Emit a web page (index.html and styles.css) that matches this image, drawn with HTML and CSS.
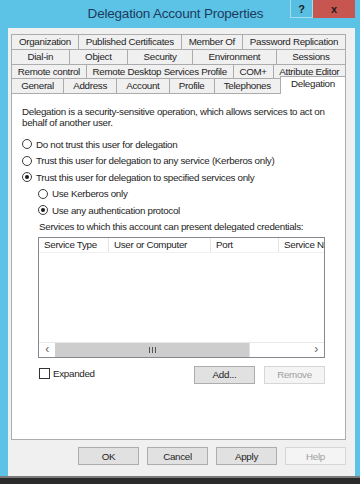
FILE: index.html
```html
<!DOCTYPE html>
<html lang="en">
<head>
  <meta charset="UTF-8">
  <meta name="viewport" content="width=device-width, initial-scale=1.0">
  <title>Delegation Account Properties</title>
  <link rel="stylesheet" href="styles.css">
</head>
<body>
  <div class="window">
    <div class="titlebar">
      <span></span>
      <span class="title">Delegation Account Properties</span>
      <div class="caption-btns">
        <span class="cap help">?</span>
        <span class="cap close">x</span>
      </div>
    </div>

    <div class="dialog">
      <div class="tabs">
        <div class="tab-row">
          <span class="tab">Organization</span>
          <span class="tab">Published Certificates</span>
          <span class="tab">Member Of</span>
          <span class="tab">Password Replication</span>
        </div>
        <div class="tab-row">
          <span class="tab">Dial-in</span>
          <span class="tab">Object</span>
          <span class="tab">Security</span>
          <span class="tab">Environment</span>
          <span class="tab">Sessions</span>
        </div>
        <div class="tab-row">
          <span class="tab">Remote control</span>
          <span class="tab">Remote Desktop Services Profile</span>
          <span class="tab">COM+</span>
          <span class="tab">Attribute Editor</span>
        </div>
        <div class="tab-row front">
          <span class="tab">General</span>
          <span class="tab">Address</span>
          <span class="tab">Account</span>
          <span class="tab">Profile</span>
          <span class="tab">Telephones</span>
          <span class="tab active">Delegation</span>
        </div>
      </div>

      <div class="panel">
        <p class="intro">Delegation is a security-sensitive operation, which allows services to act on behalf of another user.</p>

        <label class="opt"><span class="radio"></span>Do not trust this user for delegation</label>
        <label class="opt"><span class="radio"></span>Trust this user for delegation to any service (Kerberos only)</label>
        <label class="opt"><span class="radio on"></span>Trust this user for delegation to specified services only</label>
        <div class="sub">
          <label class="opt"><span class="radio"></span>Use Kerberos only</label>
          <label class="opt"><span class="radio on"></span>Use any authentication protocol</label>

          <p class="list-label">Services to which this account can present delegated credentials:</p>
          <div class="listview">
            <div class="list-head">
              <span class="col c1">Service Type</span>
              <span class="col c2">User or Computer</span>
              <span class="col c3">Port</span>
              <span class="col c4">Service Na</span>
            </div>
            <div class="list-body"></div>
            <div class="hscroll">
              <span class="arrow">&lsaquo;</span>
              <span class="thumb"><span class="grip"></span></span>
              <span class="track"></span>
              <span class="arrow">&rsaquo;</span>
            </div>
          </div>

          <div class="list-actions">
            <label class="check"><span class="box"></span>Expanded</label>
            <div class="actions">
              <span class="btn">Add...</span>
              <span class="btn disabled">Remove</span>
            </div>
          </div>
        </div>
      </div>

      <div class="footer">
        <span class="btn">OK</span>
        <span class="btn">Cancel</span>
        <span class="btn">Apply</span>
        <span class="btn disabled">Help</span>
      </div>
    </div>
  </div>
  <div class="taskbar"></div>
</body>
</html>
```

FILE: styles.css
```css
body {
  margin:0; padding:0;
  width:360px; height:484px; overflow:hidden;
  font-family: "Liberation Sans", Arial, sans-serif;
  font-size:9.8px; letter-spacing:-0.3px; color:#1e1e1e;
  background:#3a3a3a;
}
.window {
  background:#5cc3e6;
  height:476px;
  padding:0 5px 0 8px;
  box-sizing:border-box;
  display:flex; flex-direction:column;
}
.titlebar {
  height:28px;
  display:grid; grid-template-columns:1fr auto 1fr;
  margin-left:-8px;
}
.title {
  font-size:13.5px; letter-spacing:-0.2px; color:#1d3b5e;
  padding-top:6px; padding-right:4px;
}
.caption-btns { display:flex; justify-self:end; height:18px; }
.cap {
  display:flex; align-items:center; justify-content:center;
  font-weight:bold; font-size:11px; color:#1c1c1c;
}
.help {
  width:21px; background:#58bfe2;
  border:1px solid #a4dcf0; border-top:none;
}
.close { width:42px; background:#c75550; }

.dialog {
  flex:1;
  background:#f0f0f0;
  padding:6px 9px 0 3px;
  display:flex; flex-direction:column;
}

/* tabs */
.tabs { padding-left:1px; }
.tab-row { display:flex; height:15px; }
.tab {
  flex:1 1 auto;
  border:1px solid #acacac; border-bottom:none;
  margin-left:-1px;
  background:#f0f0f0;
  text-align:center; line-height:14px;
  white-space:nowrap;
}
.tab-row.front { height:14px; align-items:flex-end; }
.tab-row.front .tab { height:14px; }
.tab.active {
  flex-grow:0; width:64px;
  background:#fff; height:17px !important;
  margin-top:-3px; line-height:13px;
  position:relative; z-index:1;
  margin-bottom:-1px;
}

/* panel */
.panel {
  height:347px; box-sizing:border-box;
  background:#fff; border:1px solid #acacac;
  padding:12px 10px 0 10px;
}
.intro { margin:0 0 8px; line-height:11px; }
.opt {
  display:flex; align-items:center;
  height:16.5px;
}
.radio {
  width:10px; height:10px; box-sizing:border-box;
  border:1px solid #3c3c3c; border-radius:50%;
  margin-right:4px; background:#fff;
  display:flex; align-items:center; justify-content:center;
}
.radio.on::after {
  content:""; width:4px; height:4px; border-radius:50%; background:#1a1a1a;
}
.sub { padding-left:16px; }
.list-label { margin:2px 0 4px 1px; line-height:12px; }

.listview {
  width:287px; height:121px; box-sizing:border-box;
  border:1px solid #828790;
  display:flex; flex-direction:column;
}
.list-head { display:flex; height:14px; border-bottom:1px solid #f0f0f0; }
.col {
  border-right:1px solid #e5e5e5;
  padding-left:5px; line-height:14px;
  white-space:nowrap; overflow:hidden;
}
.c1 { width:64px; }
.c2 { width:96px; }
.c3 { width:62px; }
.c4 { flex:1; border-right:none; }
.list-body { flex:1; }
.hscroll {
  display:flex; height:14px;
  border-top:1px solid #e8e8e8;
  background:#fff;
}
.arrow {
  width:16px; text-align:center; line-height:13px;
  font-size:12px; color:#666;
}
.thumb {
  width:194px; background:#cdcdcd;
  display:flex; align-items:center; justify-content:center;
}
.grip {
  width:7px; height:6px;
  background:repeating-linear-gradient(90deg, #555 0 1px, transparent 1px 3px);
}
.track { flex:1; background:#fff; border-left:1px solid #e0e0e0; }

.list-actions {
  display:flex; justify-content:space-between;
  margin-top:9px; width:287px;
}
.check { display:flex; align-items:flex-start; padding-left:1px; padding-top:1px; }
.box {
  width:9px; height:9px; border:1px solid #333; background:#fff;
  margin-right:3px;
}
.actions { display:flex; gap:9px; margin-top:-1px; }

.btn {
  width:61px; height:18px; box-sizing:border-box;
  display:flex; align-items:center; justify-content:center;
  background:#e1e1e1; border:1px solid #adadad;
}
.btn.disabled { background:#f4f4f4; border-color:#d6d6d6; color:#a0a0a0; }

.footer {
  display:flex; justify-content:flex-end; gap:8px;
  padding-top:7px;
}

.taskbar {
  height:8px;
  background:#2a2a2a;
  border-top:2px solid #7a7a7a;
}
```
